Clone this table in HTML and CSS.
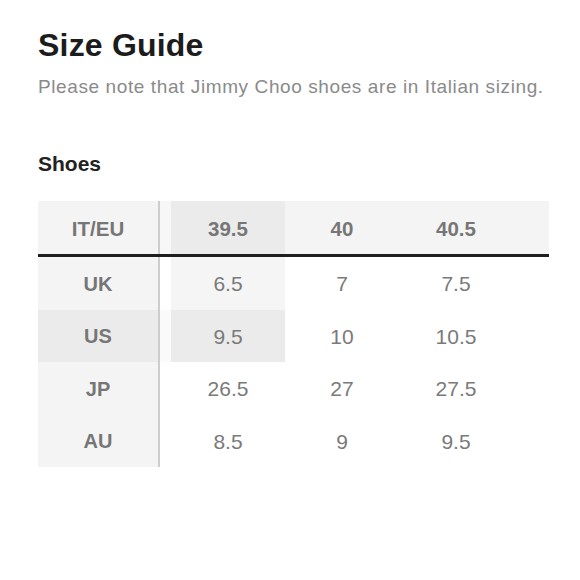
FILE: index.html
```html
<!DOCTYPE html>
<html lang="en">
<head>
<meta charset="utf-8">
<title>Size Guide</title>
<link rel="stylesheet" href="styles.css">
</head>
<body>
<main class="guide">
  <h1 class="title">Size Guide</h1>
  <p class="note">Please note that Jimmy Choo shoes are in Italian sizing.</p>
  <h2 class="section">Shoes</h2>
  <div class="table">
    <div class="row head">
      <div class="cell label">IT/EU</div>
      <div class="gap"></div>
      <div class="cell col-hl">39.5</div>
      <div class="cell">40</div>
      <div class="cell">40.5</div>
      <div class="cell tail"></div>
    </div>
    <div class="row">
      <div class="cell label">UK</div>
      <div class="gap"></div>
      <div class="cell col-soft">6.5</div>
      <div class="cell">7</div>
      <div class="cell">7.5</div>
      <div class="cell tail"></div>
    </div>
    <div class="row active">
      <div class="cell label">US</div>
      <div class="gap"></div>
      <div class="cell col-hl">9.5</div>
      <div class="cell">10</div>
      <div class="cell">10.5</div>
      <div class="cell tail"></div>
    </div>
    <div class="row">
      <div class="cell label">JP</div>
      <div class="gap"></div>
      <div class="cell">26.5</div>
      <div class="cell">27</div>
      <div class="cell">27.5</div>
      <div class="cell tail"></div>
    </div>
    <div class="row">
      <div class="cell label">AU</div>
      <div class="gap"></div>
      <div class="cell">8.5</div>
      <div class="cell">9</div>
      <div class="cell">9.5</div>
      <div class="cell tail"></div>
    </div>
  </div>
</main>
</body>
</html>
```

FILE: styles.css
```css
html, body {
  margin: 0;
  padding: 0;
  background: #ffffff;
}

body {
  font-family: "Liberation Sans", Arial, sans-serif;
  padding: 27px 31px 0 38px;
}

.guide {
  display: flex;
  flex-direction: column;
}

.title {
  margin: 0;
  font-size: 32px;
  line-height: 36px;
  font-weight: 700;
  color: #1c1c1c;
  letter-spacing: 0.2px;
}

.note {
  margin: 12px 0 0;
  font-size: 19px;
  line-height: 24px;
  color: #8a8a8a;
  letter-spacing: 0.6px;
}

.section {
  margin: 52px 0 0;
  font-size: 21px;
  line-height: 26px;
  font-weight: 700;
  color: #222222;
}

.table {
  margin-top: 24px;
  display: flex;
  flex-direction: column;
  width: 511px;
}

.row {
  display: grid;
  grid-template-columns: 122px 11px 114px 114px 114px 1fr;
  height: 52.5px;
}

.row.head {
  height: 53px;
  background: #f4f4f4;
  border-bottom: 3px solid #1e1e1e;
  box-sizing: content-box;
}

.cell {
  display: flex;
  align-items: center;
  justify-content: center;
  padding-top: 2px;
  box-sizing: border-box;
  font-size: 21px;
  color: #7a7a7a;
}

.head .cell {
  font-size: 20.5px;
  font-weight: 700;
  color: #767676;
}

.head .gap {
  background: #f7f7f7;
}

.label {
  background: #f4f4f4;
  border-right: 2px solid #cdcdcd;
  font-size: 20px;
  font-weight: 700;
  color: #767676;
}

.head .label {
  background: #f4f4f4;
}

.col-hl {
  background: #ebebeb;
}

.col-soft {
  background: #f5f5f5;
}

.row.active .label {
  background: #ebebeb;
}

.row.active .gap {
  background: #fafafa;
}

.tail {
  background: transparent;
}
```
